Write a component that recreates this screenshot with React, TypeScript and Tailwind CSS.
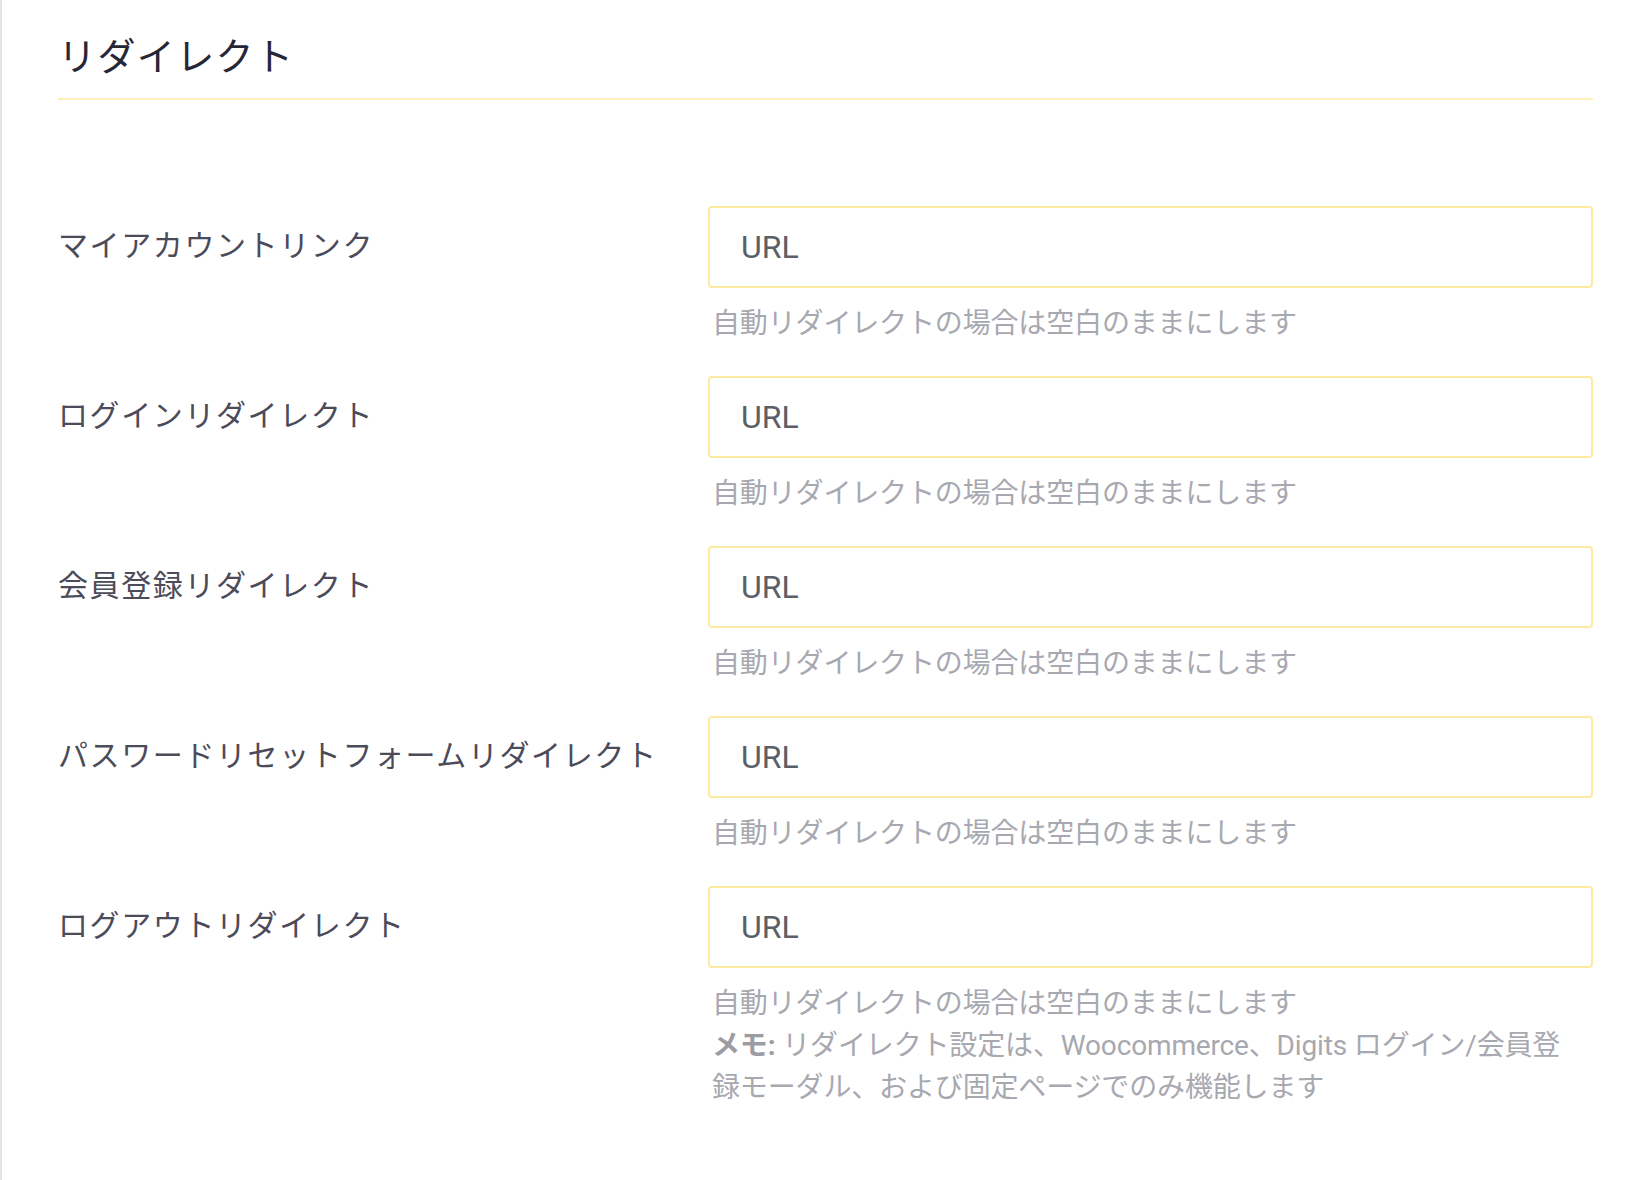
const redirects = [
  "マイアカウントリンク",
  "ログインリダイレクト",
  "会員登録リダイレクト",
  "パスワードリセットフォームリダイレクト",
  "ログアウトリダイレクト",
]

const font = "font-['Roboto','Noto_Sans_CJK_JP',sans-serif]"

function RedirectRow({ label, last }: { label: string; last?: boolean }) {
  return (
    <div className="grid grid-cols-[650px_1fr] pb-[31px]">
      <div className="pt-[20px] text-[30px] leading-[40px] tracking-[1.6px] text-[#4b4b5a]">{label}</div>
      <div>
        <input
          type="text"
          placeholder="URL"
          className="block h-[82px] w-full rounded-[4px] border-2 border-[#fdeaa2] bg-white px-[31px] text-[32px] text-[#5b6068] outline-none placeholder:text-[#5b6068]"
        />
        <div className="mt-[15px] pl-[4px] text-[28px] leading-[42px] tracking-[-0.15px] text-[#a8a8b0]">
          自動リダイレクトの場合は空白のままにします
          {last && (
            <>
              <br />
              <span className="font-bold text-[#9c9ca4]">メモ:</span> リダイレクト設定は、Woocommerce、Digits ログイン/会員登
              <br />
              録モーダル、および固定ページでのみ機能します
            </>
          )}
        </div>
      </div>
    </div>
  )
}

export default function App() {
  return (
    <div className={`${font} min-h-[1180px] border-l-2 border-[#e4e4e4] bg-white pl-[56px] pr-[41px]`}>
      <h1 className="border-b-2 border-[#fcefbc] pt-[33px] pb-[17px] text-[38px] leading-[48px] tracking-[1.4px] text-[#262637]">
        リダイレクト
      </h1>
      <div className="pt-[106px]">
        {redirects.map((label, i) => (
          <RedirectRow key={label} label={label} last={i === redirects.length - 1} />
        ))}
      </div>
    </div>
  )
}
